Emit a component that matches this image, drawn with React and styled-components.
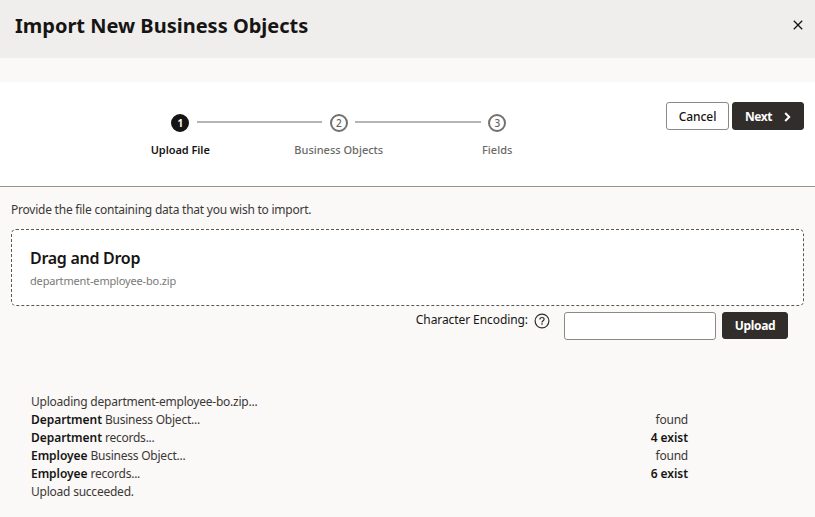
import React from "react";
import styled, { createGlobalStyle } from "styled-components";

const GlobalStyle = createGlobalStyle`
  * { box-sizing: border-box; }
  body {
    margin: 0;
    background: #fbf9f8;
    color: #161513;
    font: 400 12px/18px "Noto Sans", "Open Sans", sans-serif;
  }
  button, input { font: inherit; }
`;

const Page = styled.div`
  width: 815px;
  height: 517px;
  overflow: hidden;
  display: flex;
  flex-direction: column;
`;

const Header = styled.header`
  height: 58px;
  margin-bottom: 24px;
  padding: 11px 10px 0 15px;
  display: flex;
  align-items: flex-start;
  justify-content: space-between;
  background: #f0eeed;
`;

const Title = styled.h1`
  margin: 0;
  font-size: 20px;
  line-height: 30px;
  font-weight: 700;
  white-space: nowrap;
  letter-spacing: ${(p) => p.$spacing}px;
`;

const CloseButton = styled.button`
  width: 14px;
  height: 14px;
  margin-top: 7px;
  padding: 0;
  border: 0;
  background: none;
  display: grid;
  place-items: center;
`;

const Toolbar = styled.section`
  height: 105px;
  padding: 20px 11px 0 101px;
  display: flex;
  align-items: flex-start;
  justify-content: space-between;
  background: #fff;
  border-bottom: 1px solid #99958e;
`;

const Train = styled.ol`
  list-style: none;
  margin: 0;
  padding: 11px 0 0;
  display: grid;
  grid-template-columns: repeat(3, 158.5px);
`;

const Step = styled.li`
  display: flex;
  flex-direction: column;
  align-items: center;
`;

const Track = styled.div`
  width: 100%;
  height: 20px;
  display: grid;
  grid-template-columns: 1fr 33px 1fr;
  align-items: center;
  justify-items: center;
`;

const Line = styled.span`
  width: 100%;
  height: 2px;
  margin-top: -2px;
  background: ${(p) => (p.$on ? "#b6b5b3" : "transparent")};
`;

const Marker = styled.span`
  width: 18px;
  height: 18px;
  border-radius: 50%;
  border: 2px solid ${(p) => (p.$active ? "#161513" : "#73716e")};
  background: ${(p) => (p.$active ? "#161513" : "#fff")};
  color: ${(p) => (p.$active ? "#fff" : "#65625f")};
  font-size: 10px;
  line-height: 14px;
  font-weight: ${(p) => (p.$active ? 700 : 500)};
  text-align: center;
`;

const StepLabel = styled.span`
  margin-top: 9px;
  font-size: 11px;
  line-height: 16px;
  font-weight: ${(p) => (p.$active ? 600 : 500)};
  color: ${(p) => (p.$active ? "#161513" : "#6b6966")};
  white-space: nowrap;
  letter-spacing: ${(p) => p.$spacing}px;
`;

const Actions = styled.div`
  display: flex;
  gap: 3px;
`;

const Button = styled.button`
  width: ${(p) => p.$width}px;
  height: ${(p) => p.$height || 28}px;
  padding: 1px 0 0;
  display: flex;
  align-items: center;
  justify-content: center;
  gap: 12px;
  border-radius: 3px;
  border: 1px solid ${(p) => (p.$solid ? "#312d2a" : "#8b8987")};
  background: ${(p) => (p.$solid ? "#312d2a" : "#fff")};
  color: ${(p) => (p.$solid ? "#fff" : "#161513")};
  font-weight: ${(p) => (p.$solid ? 700 : 500)};
  letter-spacing: ${(p) => p.$spacing || 0}px;
`;

const Content = styled.main`
  padding: 14px 11px 0;
`;

const Text = styled.span`
  letter-spacing: ${(p) => (p.$bold ? -0.05 : -0.23)}px;
  font-weight: ${(p) => (p.$bold ? 600 : 400)};
  color: ${(p) => (p.$bold ? "#161513" : "#3a3835")};
  white-space: pre;
`;

const Intro = styled.p`
  margin: 0 0 10px;
`;

const DropZone = styled.section`
  height: 77px;
  padding: 15px 18px;
  border: 1px dashed #5b5956;
  border-radius: 5px;
  background: #fff;
`;

const DropTitle = styled.h2`
  margin: 0;
  font-size: 16px;
  line-height: 26px;
  font-weight: 600;
  letter-spacing: ${(p) => p.$spacing}px;
`;

const FileName = styled.div`
  margin-top: 1px;
  font-size: 11px;
  line-height: 18px;
  color: #7b7976;
  letter-spacing: ${(p) => p.$spacing}px;
`;

const EncodingRow = styled.div`
  height: 34px;
  padding: 6px 16px 0 0;
  display: flex;
  align-items: flex-start;
  justify-content: flex-end;
`;

const FieldLabel = styled.label`
  margin: -1px 6px 0 0;
  letter-spacing: ${(p) => p.$spacing}px;
  white-space: nowrap;
`;

const Help = styled.svg`
  margin: 1px 14px 0 0;
  flex: none;
`;

const Field = styled.input`
  width: 152px;
  height: 28px;
  margin-right: 6px;
  border: 1px solid #8b8987;
  border-radius: 3px;
  background: #fff;
`;

const Log = styled.div`
  width: 657px;
  margin: 53px 0 0 20px;
`;

const LogRow = styled.div`
  height: 18px;
  display: flex;
  justify-content: space-between;
`;

const steps = [
  { name: "Upload File", spacing: -0.06 },
  { name: "Business Objects", spacing: 0 },
  { name: "Fields", spacing: 0.05 },
];

const log = [
  { text: "Uploading department-employee-bo.zip..." },
  { lead: "Department", text: " Business Object...", result: "found" },
  { lead: "Department", text: " records...", result: "4 exist", strong: true },
  { lead: "Employee", text: " Business Object...", result: "found" },
  { lead: "Employee", text: " records...", result: "6 exist", strong: true },
  { text: "Upload succeeded." },
];

export default function App() {
  return (
    <Page>
      <GlobalStyle />
      <Header>
        <Title $spacing={0}>Import New Business Objects</Title>
        <CloseButton aria-label="Close">
          <svg width="14" height="14" viewBox="0 0 14 14" fill="none" stroke="#161513" strokeWidth="1.3">
            <path d="M2.8 2.8 11.2 11.2M11.2 2.8 2.8 11.2" />
          </svg>
        </CloseButton>
      </Header>
      <Toolbar>
        <Train>
          {steps.map((step, i) => (
            <Step key={step.name}>
              <Track>
                <Line $on={i > 0} />
                <Marker $active={i === 0}>{i + 1}</Marker>
                <Line $on={i < steps.length - 1} />
              </Track>
              <StepLabel $active={i === 0} $spacing={step.spacing}>{step.name}</StepLabel>
            </Step>
          ))}
        </Train>
        <Actions>
          <Button $width={63} $spacing={-0.05}>Cancel</Button>
          <Button $width={72} $spacing={-0.4} $solid>
            Next
            <svg width="7" height="10" viewBox="0 0 7 10" fill="none" stroke="#fff" strokeWidth="2">
              <path d="M1.2 1 5.2 5 1.2 9" />
            </svg>
          </Button>
        </Actions>
      </Toolbar>
      <Content>
        <Intro>
          <Text>Provide the file containing data that you wish to import.</Text>
        </Intro>
        <DropZone>
          <DropTitle $spacing={-0.28}>Drag and Drop</DropTitle>
          <FileName $spacing={-0.17}>department-employee-bo.zip</FileName>
        </DropZone>
        <EncodingRow>
          <FieldLabel htmlFor="encoding" $spacing={-0.08}>Character Encoding:</FieldLabel>
          <Help width="16" height="16" viewBox="0 0 16 16" fill="none" stroke="#312d2a">
            <circle cx="8" cy="8" r="6.9" strokeWidth="1.2" />
            <path d="M5.9 6.5c0-1.3.9-2 2.1-2s2.1.7 2.1 1.8c0 1.4-2.1 1.5-2.1 3.1" strokeWidth="1.2" />
            <path d="M8 10.3v1.4" strokeWidth="1.3" />
          </Help>
          <Field id="encoding" />
          <Button $width={66} $height={27} $spacing={-0.35} $solid>Upload</Button>
        </EncodingRow>
        <Log>
          {log.map((row) => (
            <LogRow key={(row.lead || "") + row.text}>
              <span>
                {row.lead && <Text $bold>{row.lead}</Text>}
                <Text>{row.text}</Text>
              </span>
              {row.result && <Text $bold={row.strong}>{row.result}</Text>}
            </LogRow>
          ))}
        </Log>
      </Content>
    </Page>
  );
}
